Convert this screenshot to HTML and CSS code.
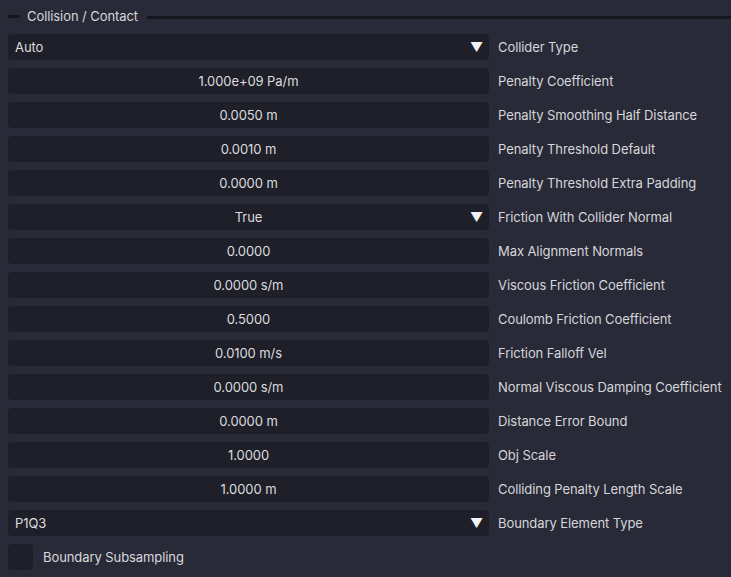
FILE: index.html
```html
<!DOCTYPE html>
<html lang="en">
<head>
    <meta charset="UTF-8">
    <meta name="viewport" content="width=device-width, initial-scale=1.0">
    <title>Collision / Contact</title>
    <link rel="stylesheet" href="styles.css">
</head>
<body>
    <div class="panel">
        <div class="group-header">
            <span class="line short"></span>
            <span class="group-title">Collision / Contact</span>
            <span class="line long"></span>
        </div>

        <div class="props">
            <div class="field select left">Auto<span class="arrow">&#9660;</span></div>
            <div class="label">Collider Type</div>

            <div class="field">1.000e+09 Pa/m</div>
            <div class="label">Penalty Coefficient</div>

            <div class="field">0.0050 m</div>
            <div class="label">Penalty Smoothing Half Distance</div>

            <div class="field">0.0010 m</div>
            <div class="label">Penalty Threshold Default</div>

            <div class="field">0.0000 m</div>
            <div class="label">Penalty Threshold Extra Padding</div>

            <div class="field select">True<span class="arrow">&#9660;</span></div>
            <div class="label">Friction With Collider Normal</div>

            <div class="field">0.0000</div>
            <div class="label">Max Alignment Normals</div>

            <div class="field">0.0000 s/m</div>
            <div class="label">Viscous Friction Coefficient</div>

            <div class="field">0.5000</div>
            <div class="label">Coulomb Friction Coefficient</div>

            <div class="field">0.0100 m/s</div>
            <div class="label">Friction Falloff Vel</div>

            <div class="field">0.0000 s/m</div>
            <div class="label">Normal Viscous Damping Coefficient</div>

            <div class="field">0.0000 m</div>
            <div class="label">Distance Error Bound</div>

            <div class="field">1.0000</div>
            <div class="label">Obj Scale</div>

            <div class="field">1.0000 m</div>
            <div class="label">Colliding Penalty Length Scale</div>

            <div class="field select left">P1Q3<span class="arrow">&#9660;</span></div>
            <div class="label">Boundary Element Type</div>
        </div>

        <label class="check-row">
            <span class="checkbox"></span>
            <span>Boundary Subsampling</span>
        </label>
    </div>
</body>
</html>
```

FILE: styles.css
```css
* {
    margin: 0;
    padding: 0;
    box-sizing: border-box;
}

body {
    font-family: Inter, "Noto Sans", sans-serif;
    font-size: 13px;
    letter-spacing: -0.08px;
    background: #292a37;
    color: #d9d9de;
    min-height: 100vh;
}

.panel {
    padding: 3px 0 0 8px;
}

.group-header {
    display: flex;
    align-items: center;
    height: 26px;
    margin-bottom: 5px;
}

.line {
    height: 3px;
    background: #16161e;
}

.line.short {
    width: 12px;
    margin-right: 7px;
}

.line.long {
    flex: 1;
    margin-left: 9px;
    margin-top: 2px;
}

.group-title {
    color: #d6d6db;
}

.props {
    display: grid;
    grid-template-columns: 481px 1fr;
    column-gap: 9px;
    row-gap: 8px;
}

.field {
    position: relative;
    height: 26px;
    line-height: 26px;
    background: #1e1f29;
    border-radius: 4px;
    text-align: center;
    color: #dcdcdf;
}

.field.left {
    text-align: left;
    padding-left: 7px;
}

.arrow {
    position: absolute;
    right: 6px;
    top: 0;
    font-size: 13px;
    color: #f2f2f4;
}

.label {
    line-height: 26px;
    color: #d6d6db;
}

.check-row {
    display: flex;
    align-items: center;
    gap: 10px;
    margin-top: 8px;
}

.checkbox {
    width: 25px;
    height: 26px;
    background: #1e1f29;
    border-radius: 4px;
}
```
